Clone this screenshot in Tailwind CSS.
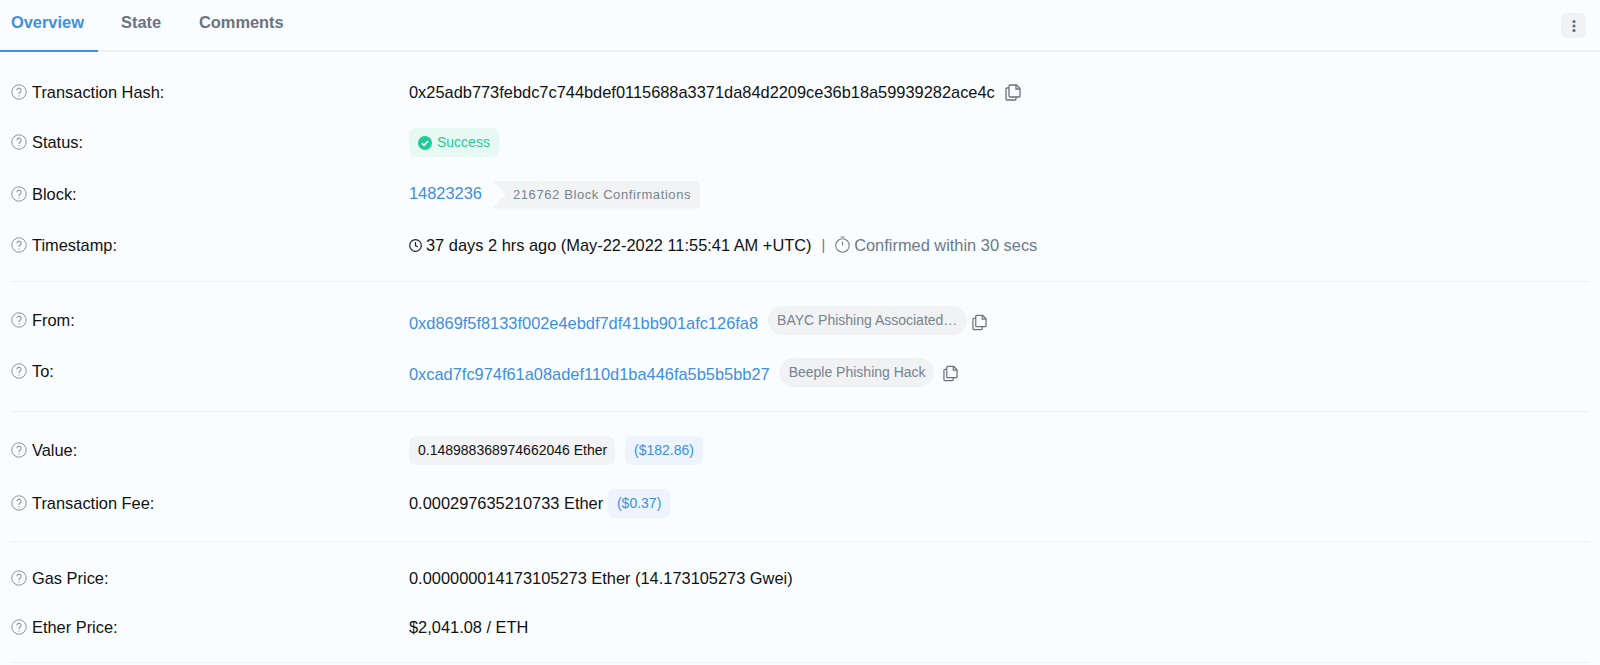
<!DOCTYPE html>
<html>
  <head>
    <meta charset="UTF-8" />
    <meta name="viewport" content="width=device-width, initial-scale=1.0" />
    <title>Transaction details</title>
    <script src="https://cdn.jsdelivr.net/npm/@tailwindcss/browser@4"></script>
  </head>
  <body class="bg-[#fafdff] h-[665px] overflow-hidden font-['Liberation_Sans',Arial,sans-serif] text-[16.4px] text-[#111]">
    <!-- Tabs -->
    <div class="h-[52px] flex justify-between border-b-2 border-[#f0f2f8]">
      <div class="flex font-bold text-[#6b7280]">
        <div class="w-[98px] h-[52px] pl-[11px] pt-[10px] text-[#3d90e0] border-b-2 border-[#3d90e0]">Overview</div>
        <div class="w-[81px] pl-[23px] pt-[10px]">State</div>
        <div class="pl-[20px] pt-[10px]">Comments</div>
      </div>
      <div class="pt-[13px] pr-[14px]">
        <div class="w-[25px] h-[25px] rounded-[5px] bg-[#f1f2f4] flex items-center justify-center">
          <svg width="4" height="14" viewBox="0 0 4 14" fill="#5f6f80"><circle cx="2" cy="2.5" r="1.6"/><circle cx="2" cy="7" r="1.6"/><circle cx="2" cy="11.5" r="1.6"/></svg>
        </div>
      </div>
    </div>

    <!-- Group 1 -->
    <div class="mx-[11px] pt-[16px] pb-[11px] border-b border-[#edf0f4]">
      <div class="h-[49px] flex items-center">
        <div class="w-[398px] flex items-center gap-[5px]">
          <svg class="w-[16px] h-[16px]" viewBox="0 0 16 16" fill="none" stroke="#8a929c"><circle cx="8" cy="8" r="7.2"/><path d="M5.9 6.2a2.1 2.1 0 1 1 3.3 1.8c-.8.5-1.2 1-1.2 1.9" stroke-width="1.1"/><circle cx="8" cy="11.9" r=".7" fill="#8a929c" stroke="none"/></svg>
          <span>Transaction Hash:</span>
        </div>
        <span>0x25adb773febdc7c744bdef0115688a3371da84d2209ce36b18a59939282ace4c</span>
        <svg class="ml-[10px] w-[16px] h-[17px]" viewBox="0 0 16 17" fill="none" stroke="#6b7280" stroke-width="1.3"><path d="M5 1h6.5L15 4.5V12a1 1 0 0 1-1 1H5a1 1 0 0 1-1-1V2a1 1 0 0 1 1-1z"/><path d="M11 1v4h4"/><path d="M4 4H2a1 1 0 0 0-1 1v10a1 1 0 0 0 1 1h8a1 1 0 0 0 1-1v-2"/></svg>
      </div>
      <div class="h-[51px] flex items-center">
        <div class="w-[398px] flex items-center gap-[5px]">
          <svg class="w-[16px] h-[16px]" viewBox="0 0 16 16" fill="none" stroke="#8a929c"><circle cx="8" cy="8" r="7.2"/><path d="M5.9 6.2a2.1 2.1 0 1 1 3.3 1.8c-.8.5-1.2 1-1.2 1.9" stroke-width="1.1"/><circle cx="8" cy="11.9" r=".7" fill="#8a929c" stroke="none"/></svg>
          <span>Status:</span>
        </div>
        <div class="h-[29px] w-[90px] rounded-[7px] bg-[#e8f9f4] text-[#1fcb98] text-[14px] flex items-center pl-[9px] gap-[5px]">
          <svg class="w-[14px] h-[14px]" viewBox="0 0 14 14"><circle cx="7" cy="7" r="7" fill="#1fcb98"/><path d="M3.8 7.2l2.2 2.2 4.2-4.4" fill="none" stroke="#fff" stroke-width="1.7"/></svg>
          <span>Success</span>
        </div>
      </div>
      <div class="h-[53px] flex items-center">
        <div class="w-[398px] flex items-center gap-[5px]">
          <svg class="w-[16px] h-[16px]" viewBox="0 0 16 16" fill="none" stroke="#8a929c"><circle cx="8" cy="8" r="7.2"/><path d="M5.9 6.2a2.1 2.1 0 1 1 3.3 1.8c-.8.5-1.2 1-1.2 1.9" stroke-width="1.1"/><circle cx="8" cy="11.9" r=".7" fill="#8a929c" stroke="none"/></svg>
          <span>Block:</span>
        </div>
        <span class="text-[#3d8fdf] -mt-[2px]">14823236</span>
        <div class="ml-[10px] h-[28px] w-[208px] rounded-r-[4px] bg-[#f2f3f5] text-[#77838f] text-[13px] tracking-[0.6px] flex items-center pl-[21px] [clip-path:polygon(0_0,100%_0,100%_100%,0_100%,14px_50%)]">216762 Block Confirmations</div>
      </div>
      <div class="h-[49px] flex items-center">
        <div class="w-[398px] flex items-center gap-[5px]">
          <svg class="w-[16px] h-[16px]" viewBox="0 0 16 16" fill="none" stroke="#8a929c"><circle cx="8" cy="8" r="7.2"/><path d="M5.9 6.2a2.1 2.1 0 1 1 3.3 1.8c-.8.5-1.2 1-1.2 1.9" stroke-width="1.1"/><circle cx="8" cy="11.9" r=".7" fill="#8a929c" stroke="none"/></svg>
          <span>Timestamp:</span>
        </div>
        <svg class="w-[13px] h-[13px] mr-[4px]" viewBox="0 0 13 13" fill="none" stroke="#222" stroke-width="1.2"><circle cx="6.5" cy="6.5" r="5.8"/><path d="M6.5 3v3.7l2.4 1.3"/></svg>
        <span>37 days 2 hrs ago (May-22-2022 11:55:41 AM +UTC)</span>
        <span class="mx-[10px] text-[#6b7280] text-[14px]">|</span>
        <svg class="w-[15px] h-[17px] mr-[4px] -mt-[2px]" viewBox="0 0 15 17" fill="none" stroke="#77838f" stroke-width="1.1"><circle cx="7.5" cy="9.5" r="6.7"/><path d="M7.5 5.5v4M5.5 1h4"/></svg>
        <span class="text-[#6c7a89]">Confirmed within 30 secs</span>
      </div>
    </div>

    <!-- Group 2 -->
    <div class="mx-[11px] pt-[15px] pb-[12px] border-b border-[#edf0f4]">
      <div class="h-[50px] flex items-center">
        <div class="w-[398px] flex items-center gap-[5px] -mt-[4px]">
          <svg class="w-[16px] h-[16px]" viewBox="0 0 16 16" fill="none" stroke="#8a929c"><circle cx="8" cy="8" r="7.2"/><path d="M5.9 6.2a2.1 2.1 0 1 1 3.3 1.8c-.8.5-1.2 1-1.2 1.9" stroke-width="1.1"/><circle cx="8" cy="11.9" r=".7" fill="#8a929c" stroke="none"/></svg>
          <span>From:</span>
        </div>
        <span class="text-[#3d8fdf] mt-[2px]">0xd869f5f8133f002e4ebdf7df41bb901afc126fa8</span>
        <div class="ml-[10px] h-[29px] w-[199px] rounded-full bg-[#f1f2f4] text-[#77838f] text-[14px] flex items-center pl-[9px] -mt-[3px]">BAYC Phishing Associated…</div>
        <svg class="ml-[5px] w-[15px] h-[17px]" viewBox="0 0 16 17" fill="none" stroke="#6b7280" stroke-width="1.3"><path d="M5 1h6.5L15 4.5V12a1 1 0 0 1-1 1H5a1 1 0 0 1-1-1V2a1 1 0 0 1 1-1z"/><path d="M11 1v4h4"/><path d="M4 4H2a1 1 0 0 0-1 1v10a1 1 0 0 0 1 1h8a1 1 0 0 0 1-1v-2"/></svg>
      </div>
      <div class="h-[52px] flex items-center">
        <div class="w-[398px] flex items-center gap-[5px] -mt-[4px]">
          <svg class="w-[16px] h-[16px]" viewBox="0 0 16 16" fill="none" stroke="#8a929c"><circle cx="8" cy="8" r="7.2"/><path d="M5.9 6.2a2.1 2.1 0 1 1 3.3 1.8c-.8.5-1.2 1-1.2 1.9" stroke-width="1.1"/><circle cx="8" cy="11.9" r=".7" fill="#8a929c" stroke="none"/></svg>
          <span>To:</span>
        </div>
        <span class="text-[#3d8fdf] mt-[2px]">0xcad7fc974f61a08adef110d1ba446fa5b5b5bb27</span>
        <div class="ml-[9px] h-[29px] w-[155px] rounded-full bg-[#f1f2f4] text-[#77838f] text-[14px] flex items-center pl-[10px] -mt-[2px]">Beeple Phishing Hack</div>
        <svg class="ml-[9px] w-[15px] h-[17px] mt-[1px]" viewBox="0 0 16 17" fill="none" stroke="#6b7280" stroke-width="1.3"><path d="M5 1h6.5L15 4.5V12a1 1 0 0 1-1 1H5a1 1 0 0 1-1-1V2a1 1 0 0 1 1-1z"/><path d="M11 1v4h4"/><path d="M4 4H2a1 1 0 0 0-1 1v10a1 1 0 0 0 1 1h8a1 1 0 0 0 1-1v-2"/></svg>
      </div>
    </div>

    <!-- Group 3 -->
    <div class="mx-[11px] pt-[13px] pb-[11px] border-b border-[#edf0f4]">
      <div class="h-[50px] flex items-center">
        <div class="w-[398px] flex items-center gap-[5px]">
          <svg class="w-[16px] h-[16px]" viewBox="0 0 16 16" fill="none" stroke="#8a929c"><circle cx="8" cy="8" r="7.2"/><path d="M5.9 6.2a2.1 2.1 0 1 1 3.3 1.8c-.8.5-1.2 1-1.2 1.9" stroke-width="1.1"/><circle cx="8" cy="11.9" r=".7" fill="#8a929c" stroke="none"/></svg>
          <span>Value:</span>
        </div>
        <div class="h-[29px] w-[206px] rounded-[6px] bg-[#f2f3f5] text-[14px] flex items-center pl-[9px]">0.148988368974662046 Ether</div>
        <div class="ml-[10px] h-[29px] w-[78px] rounded-[6px] bg-[#edf4fd] text-[#3d8fdf] text-[14px] flex items-center justify-center">($182.86)</div>
      </div>
      <div class="mt-[2px] h-[53px] flex items-center">
        <div class="w-[398px] flex items-center gap-[5px]">
          <svg class="w-[16px] h-[16px]" viewBox="0 0 16 16" fill="none" stroke="#8a929c"><circle cx="8" cy="8" r="7.2"/><path d="M5.9 6.2a2.1 2.1 0 1 1 3.3 1.8c-.8.5-1.2 1-1.2 1.9" stroke-width="1.1"/><circle cx="8" cy="11.9" r=".7" fill="#8a929c" stroke="none"/></svg>
          <span>Transaction Fee:</span>
        </div>
        <span>0.000297635210733 Ether</span>
        <div class="ml-[5px] h-[29px] w-[62px] rounded-[6px] bg-[#edf4fd] text-[#3d8fdf] text-[14px] flex items-center justify-center">($0.37)</div>
      </div>
    </div>

    <!-- Group 4 -->
    <div class="mx-[11px] pt-[11px] pb-[10px] border-b border-[#edf0f4]">
      <div class="h-[50px] flex items-center">
        <div class="w-[398px] flex items-center gap-[5px]">
          <svg class="w-[16px] h-[16px]" viewBox="0 0 16 16" fill="none" stroke="#8a929c"><circle cx="8" cy="8" r="7.2"/><path d="M5.9 6.2a2.1 2.1 0 1 1 3.3 1.8c-.8.5-1.2 1-1.2 1.9" stroke-width="1.1"/><circle cx="8" cy="11.9" r=".7" fill="#8a929c" stroke="none"/></svg>
          <span>Gas Price:</span>
        </div>
        <span>0.000000014173105273 Ether (14.173105273 Gwei)</span>
      </div>
      <div class="h-[49px] flex items-center">
        <div class="w-[398px] flex items-center gap-[5px]">
          <svg class="w-[16px] h-[16px]" viewBox="0 0 16 16" fill="none" stroke="#8a929c"><circle cx="8" cy="8" r="7.2"/><path d="M5.9 6.2a2.1 2.1 0 1 1 3.3 1.8c-.8.5-1.2 1-1.2 1.9" stroke-width="1.1"/><circle cx="8" cy="11.9" r=".7" fill="#8a929c" stroke="none"/></svg>
          <span>Ether Price:</span>
        </div>
        <span>$2,041.08 / ETH</span>
      </div>
    </div>
  </body>
</html>
